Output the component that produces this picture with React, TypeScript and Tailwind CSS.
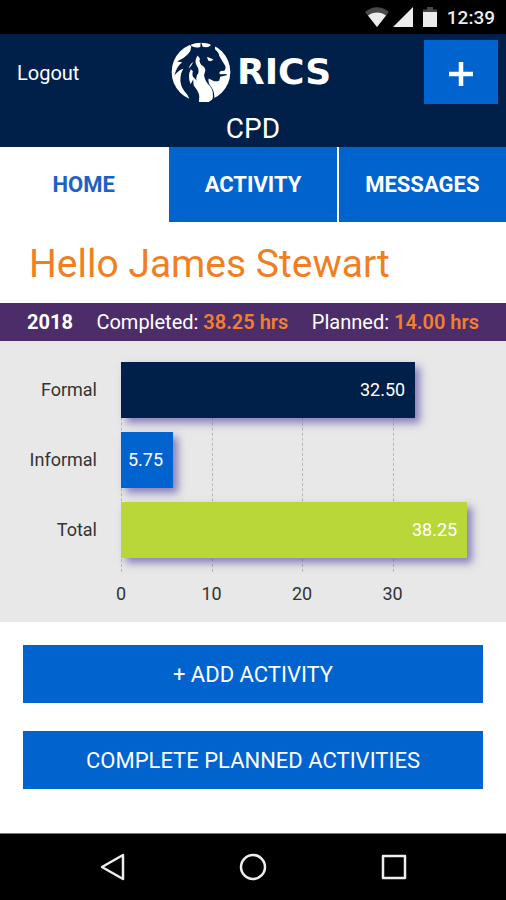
import React from "react";

const bars = [
  { label: "Formal", value: 32.5, className: "bg-[#00204a]" },
  { label: "Informal", value: 5.75, className: "bg-[#0063ce]" },
  { label: "Total", value: 38.25, className: "bg-[#bad739]" },
];
const axisMax = 40;
const ticks = [0, 10, 20, 30];

function StatusBar() {
  return (
    <div className="flex h-[34px] items-center justify-end bg-black pr-[11px] text-[#ececec]">
      <svg className="mr-1 h-5 w-6" viewBox="0 0 24 20" aria-hidden="true">
        <path d="M0 5C7-1.500 17-1.500 24 5L12 20Z" fill="#484848" />
        <path d="M3 8.500C8 4.500 16 4.500 21 8.500L12 20Z" fill="#ececec" />
      </svg>
      <svg className="mr-2.5 h-5 w-5" viewBox="0 0 20 20" aria-hidden="true">
        <path d="M20 0V20H0Z" fill="#ececec" />
      </svg>
      <svg className="mr-2.5 h-5 w-3.5" viewBox="0 0 14 20" aria-hidden="true">
        <path d="M0 5V2.500H4V0H10V2.500H14V5Z" fill="#484848" />
        <path d="M0 5H14V20H0Z" fill="#ececec" />
      </svg>
      <span className="pt-0.5 text-[19px] leading-6 font-medium">12:39</span>
    </div>
  );
}

function LionLogo() {
  return (
    <svg className="h-[60px] w-[60px]" viewBox="20 20 178 178" aria-hidden="true">
      <circle cx="109" cy="109" r="87" fill="#fff" />
      <g fill="#00204a">
        <path d="M66 16L84 16 78 30Q90 40 107 35L108 16 114 34Q126 38 137 31L138 16 156 20Q149 30 151 42Q162 50 163 61L172 76 181 91Q184 100 178 105L168 106Q160 111 166 116L185 115V119L166 123 163 134Q154 139 145 135L132 128Q128 142 140 154Q151 168 148 198H128Q132 166 116 148Q98 137 102 112Q94 118 95 130Q98 148 108 165L102 198H75Q77 190 68 176Q50 157 48 137Q47 112 57 99Q43 102 30 119Q36 94 53 80L38 78Q58 69 70 56Q80 46 80 34Z" />
      </g>
      <g fill="#fff">
        <path d="M99 60L106 70Q102 78 110 88Q121 93 122 104L118 119Q121 139 136 151Q148 166 143 190L132 198H103Q108 183 98 164L87 148 86 131 78 145Q68 120 79 101L85 107Q80 121 90 128Q98 134 104 144Q99 134 100 118Q105 102 96 90Q88 76 99 60Z" />
        <path d="M127 64L146 72 138 77 130 75Z" />
        <path d="M86 79Q77 84 72 99Q79 94 86 79Z" />
      </g>
    </svg>
  );
}

function Header() {
  return (
    <header className="bg-[#00204a] text-white">
      <div className="grid grid-cols-[1fr_auto_1fr] items-start pt-1.5 pr-2">
        <button type="button" className="justify-self-start pt-[21px] pl-[17px] text-[20px] leading-6">
          Logout
        </button>
        <div className="flex items-center gap-1.5 pt-0.5 pl-1">
          <LionLogo />
          <span className="font-['DejaVu_Sans',sans-serif] text-[36px] leading-10 font-bold">RICS</span>
        </div>
        <button
          type="button"
          aria-label="Add"
          className="flex h-16 w-[74px] items-center justify-center justify-self-end bg-[#0063ce]"
        >
          <svg className="mt-1 h-6 w-6" viewBox="0 0 24 24" aria-hidden="true">
            <path d="M12 0V24M0 12H24" stroke="#fff" strokeWidth="4.500" />
          </svg>
        </button>
      </div>
      <h1 className="pt-[9px] pb-0.5 text-center text-[28px] leading-8">CPD</h1>
    </header>
  );
}

function Tabs() {
  return (
    <nav className="grid grid-cols-3 gap-0.5 text-[22px] leading-7 font-bold">
      <a href="#home" aria-current="page" className="pt-6 pb-[23px] text-center text-[#1c62c4]">HOME</a>
      <a href="#activity" className="bg-[#0063ce] pt-6 pb-[23px] text-center text-white">ACTIVITY</a>
      <a href="#messages" className="bg-[#0063ce] pt-6 pb-[23px] text-center text-white">MESSAGES</a>
    </nav>
  );
}

function Summary() {
  return (
    <div className="flex items-center justify-between bg-[#4c2d69] px-[27px] py-[7px] text-[20px] leading-6 text-white">
      <strong>2018</strong>
      <span>Completed: <strong className="font-semibold text-[#f08030]">38.25 hrs</strong></span>
      <span>Planned: <strong className="font-semibold text-[#f08030]">14.00 hrs</strong></span>
    </div>
  );
}

function Chart() {
  return (
    <section aria-label="CPD hours" className="bg-[#e8e8e8] pt-[21px] pr-[23px] pb-4 text-[#333]">
      <div className="flex">
        <div className="flex w-[121px] shrink-0 flex-col gap-3.5 pr-6 text-right text-[18px] leading-[56px]">
          {bars.map((bar) => (
            <div key={bar.label}>{bar.label}</div>
          ))}
        </div>
        <div className="relative flex flex-1 flex-col gap-3.5 pb-3.5">
          {ticks.map((tick) => (
            <div
              key={tick}
              className="absolute inset-y-0 border-l border-dashed border-[#b8b8b8]"
              style={{ left: `${(tick / axisMax) * 100}%` }}
            />
          ))}
          {bars.map((bar) => (
            <div
              key={bar.label}
              className={`relative h-14 pr-2.5 text-right text-[18px] leading-[56px] text-white shadow-[5px_5px_8px_#5b50a8b0] ${bar.className}`}
              style={{ width: `${(bar.value / axisMax) * 100}%` }}
            >
              {bar.value.toFixed(2)}
            </div>
          ))}
        </div>
      </div>
      <div className="ml-[121px] grid grid-cols-4 pt-2.5 text-[18px] leading-6">
        {ticks.map((tick) => (
          <div key={tick} className="flex w-0 justify-center">{tick}</div>
        ))}
      </div>
    </section>
  );
}

function NavigationBar() {
  return (
    <div className="grid grid-cols-[1fr_281px_1fr] border-t border-[#777] bg-black py-[19px] text-[#eee]">
      <button type="button" aria-label="Back" className="-mr-3.5 justify-self-end">
        <svg className="h-7 w-7" viewBox="0 0 28 28" fill="none" stroke="currentColor" strokeWidth="2.500" strokeLinejoin="round" aria-hidden="true">
          <path d="M24 2V26L3 14Z" />
        </svg>
      </button>
      <button type="button" aria-label="Home" className="justify-self-center">
        <svg className="h-7 w-7" viewBox="0 0 28 28" fill="none" stroke="currentColor" strokeWidth="2.500" aria-hidden="true">
          <circle cx="14" cy="14" r="12" />
        </svg>
      </button>
      <button type="button" aria-label="Recent apps" className="-ml-3.5 justify-self-start">
        <svg className="h-7 w-7" viewBox="0 0 28 28" fill="none" stroke="currentColor" strokeWidth="2.500" strokeLinejoin="round" aria-hidden="true">
          <path d="M3 3H25V25H3Z" />
        </svg>
      </button>
    </div>
  );
}

export default function App() {
  return (
    <div className="flex min-h-screen flex-col bg-white font-[Roboto,sans-serif]">
      <StatusBar />
      <Header />
      <Tabs />
      <main className="flex-1">
        <h2 className="px-[29px] pt-[18px] pb-[15px] text-[39px] leading-[48px] text-[#f0801f]">Hello James Stewart</h2>
        <Summary />
        <Chart />
        <div className="flex flex-col gap-7 px-[23px] py-[23px] text-[22px] leading-7 text-white">
          <button type="button" className="bg-[#0063ce] pt-4 pb-3.5">+ ADD ACTIVITY</button>
          <button type="button" className="bg-[#0063ce] pt-4 pb-3.5">COMPLETE PLANNED ACTIVITIES</button>
        </div>
      </main>
      <NavigationBar />
    </div>
  );
}
